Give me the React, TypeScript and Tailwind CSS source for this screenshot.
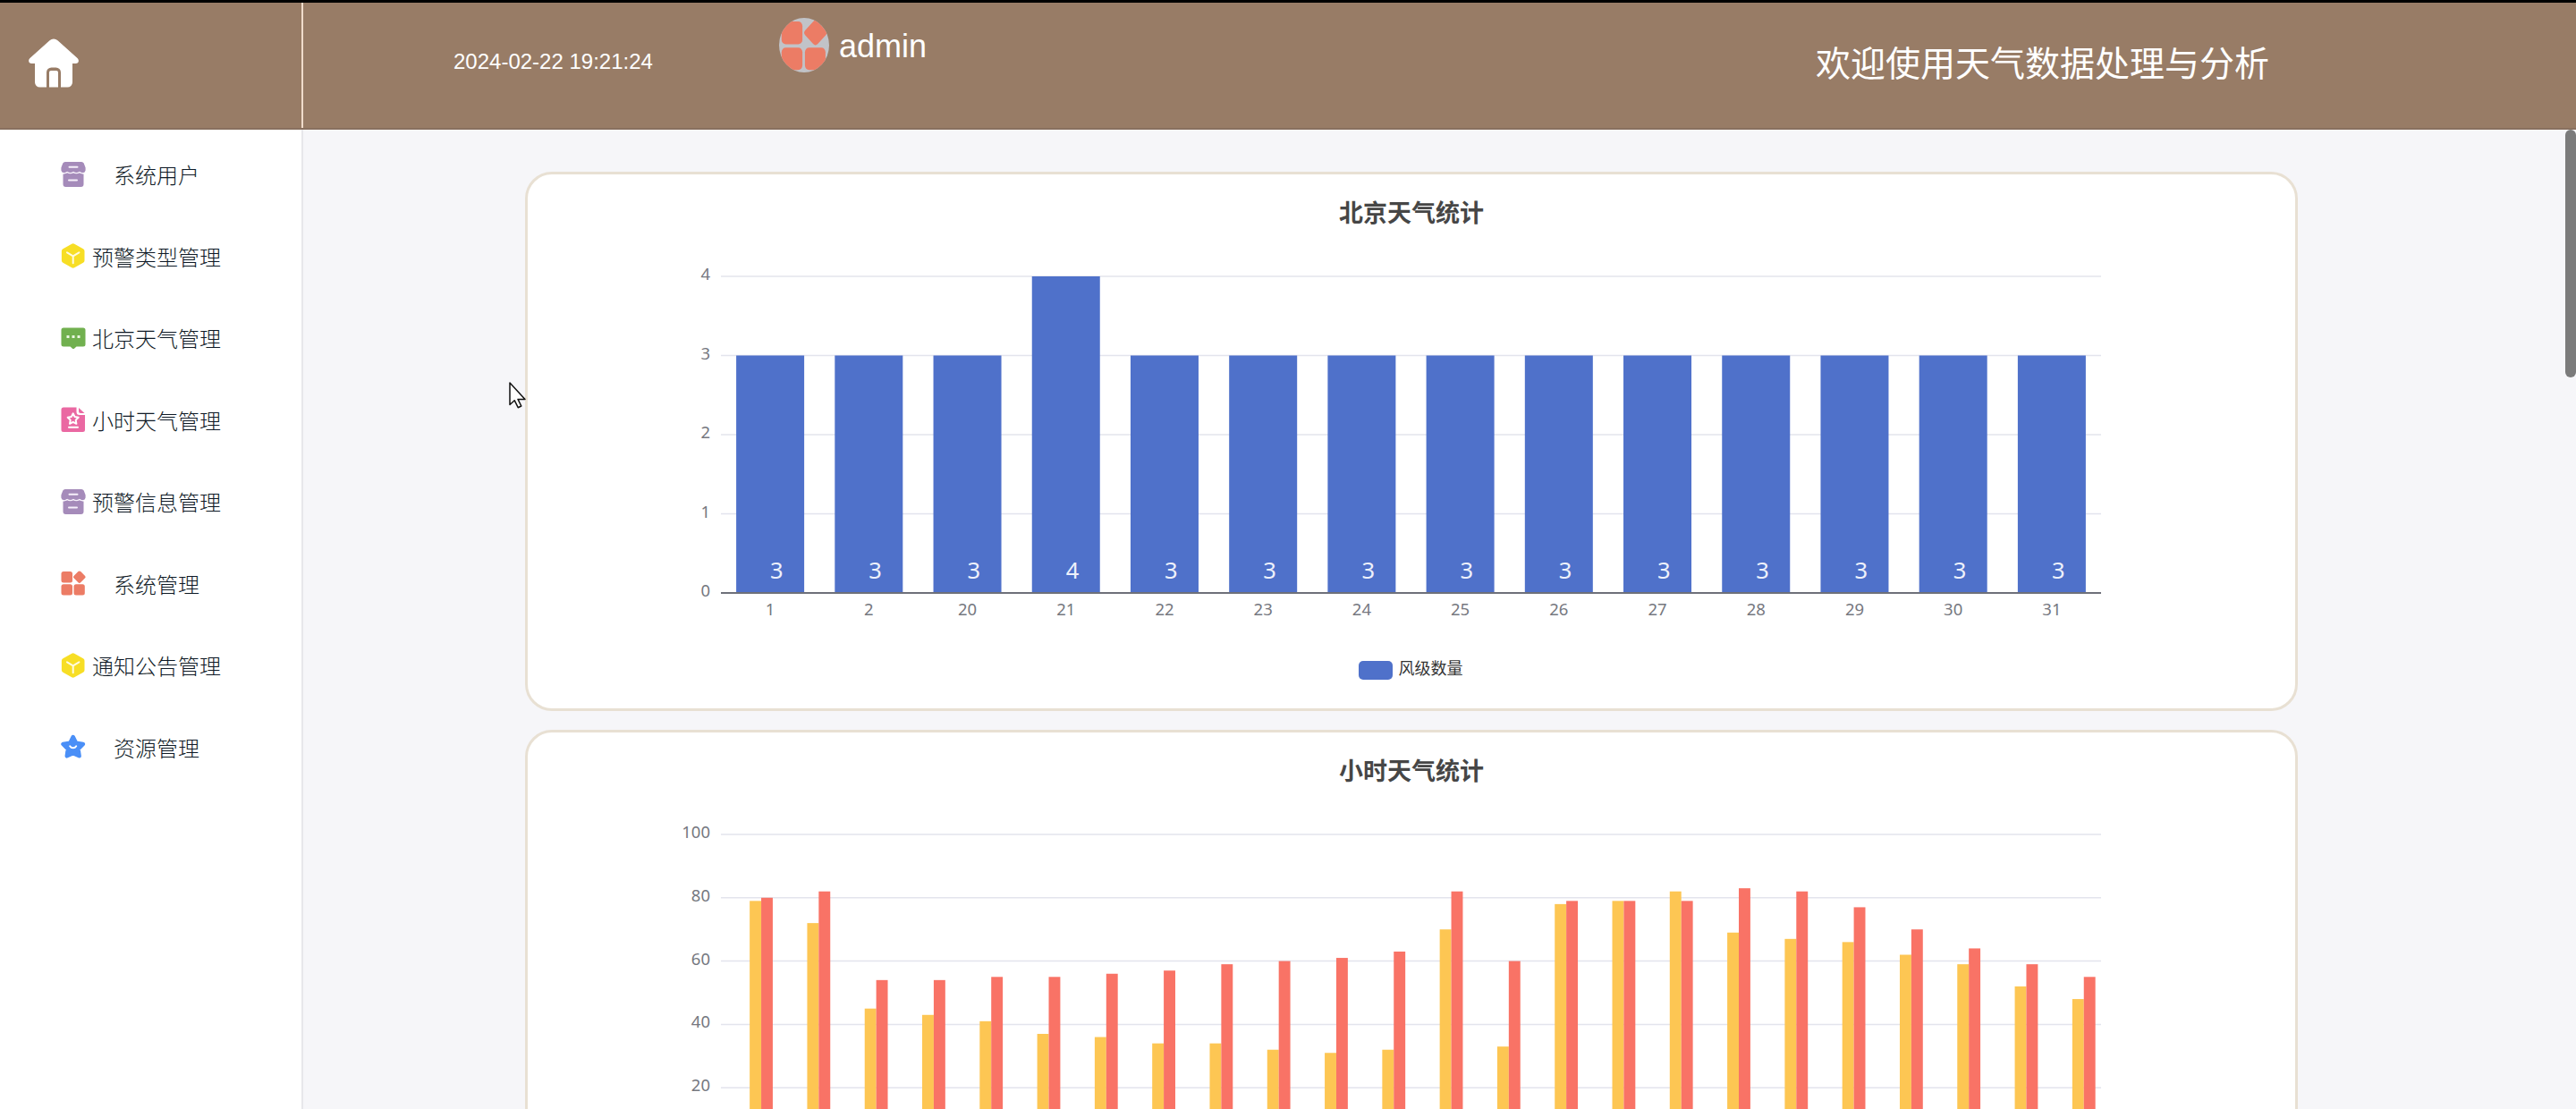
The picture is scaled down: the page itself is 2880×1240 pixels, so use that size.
import type { ReactNode } from "react";

type Series = { color: string; values: number[]; slot: number; showLabel?: boolean };

// Plot area shared by every chart, in card pixels
const PLOT = { left: 216, right: 1759, top: 114, bottom: 468 };

const StoreIcon = () => (
    <svg viewBox="0 0 28 28" className="size-7">
        <path d="M5 0h18a3 3 0 0 1 2.700 1.600L27.600 6.500v3a3.200 3.200 0 0 1-3 2.700c-1.500 0-2.500-.4-3.500-1.300-1 1-2.200 1.500-3.600 1.500s-2.600-.5-3.500-1.500c-1 1-2.200 1.500-3.600 1.500S7.900 11.900 7 10.900c-1 .9-2 1.300-3.500 1.300A3.200 3.200 0 0 1 .4 9.500v-3L2.300 1.600A3 3 0 0 1 5 0z" fill="#a58bba" />
        <path d="M2.500 13.400c2 0 3.500-.5 4.700-1.300 2 1.300 4.800 1.300 6.800 0 2 1.300 4.800 1.300 6.800 0 1.200.8 2.700 1.300 4.700 1.300V25a3 3 0 0 1-3 3h-17a3 3 0 0 1-3-3z" fill="#a58bba" />
        <path d="M2.500 12.800c2 0 3.500-.5 4.700-1.300 2 1.300 4.800 1.300 6.800 0 2 1.300 4.800 1.300 6.800 0 1.200.8 2.700 1.300 4.700 1.300" fill="none" stroke="#f6f0fa" strokeWidth="1.400" />
        <path d="M9.500 5.700h9M9 20.500h9" stroke="#f6f0fa" strokeWidth="2" strokeLinecap="round" />
    </svg>
);

const CubeIcon = () => (
    <svg viewBox="0 0 28 28" className="size-7">
        <path d="M12.200.8a3 3 0 0 1 3 0l9.800 5.400a3 3 0 0 1 1.500 2.600v10.400a3 3 0 0 1-1.500 2.600l-9.800 5.400a3 3 0 0 1-3 0l-9.800-5.400A3 3 0 0 1 .9 19.200V8.800a3 3 0 0 1 1.500-2.600z" fill="#f7de25" />
        <path d="M7 10.300l6.700 4 6.700-4M13.700 14.300v8" fill="none" stroke="#fffbe0" strokeWidth="2" strokeLinecap="round" strokeLinejoin="round" />
    </svg>
);

const ChatIcon = () => (
    <svg viewBox="0 0 28 28" className="size-7">
        <path d="M3 2.500h22a2.500 2.500 0 0 1 2.500 2.500v16a2.500 2.500 0 0 1-2.500 2.500h-7.500L15 25.700a1.500 1.500 0 0 1-2 0l-2.500-2.200H3A2.500 2.500 0 0 1 .5 21V5A2.500 2.500 0 0 1 3 2.500z" fill="#71b04f" />
        <path d="M6.500 11h3v3h-3zM12.500 11h3v3h-3zM18.500 11h3v3h-3z" fill="#eaf6e2" />
    </svg>
);

const DocIcon = () => (
    <svg viewBox="0 0 28 28" className="size-7">
        <path d="M3 .5h14.500v5a3.500 3.500 0 0 0 3.500 3.500h6v16.500a2.500 2.500 0 0 1-2.500 2.500H3A2.500 2.500 0 0 1 .5 25.500V3A2.500 2.500 0 0 1 3 .5z" fill="#ea68a2" />
        <path d="M20 1l6.500 6H22a2 2 0 0 1-2-2z" fill="#ea68a2" />
        <path d="M13.700 7.300l1.900 3.800 4.100.6-3 2.900.7 4.200-3.700-2-3.700 2 .7-4.200-3-2.900 4.100-.6z" fill="none" stroke="#fff" strokeWidth="2" strokeLinejoin="round" />
        <path d="M9 22.700h10" stroke="#fff" strokeWidth="2" strokeLinecap="round" />
    </svg>
);

const TileShapes = () => (
    <g fill="#ec7c65">
        <rect x="0.500" y="1" width="12.500" height="12.500" rx="2.500" />
        <rect x="0.500" y="15.300" width="12.500" height="12.300" rx="2.500" />
        <rect x="14.500" y="15.300" width="12.300" height="12.300" rx="2.500" />
        <rect x="15.500" y="1.900" width="10.600" height="10.600" rx="2" transform="rotate(45 20.800 7.200)" />
    </g>
);

const TilesIcon = () => (
    <svg viewBox="0 0 28 28" className="size-7">
        <TileShapes />
    </svg>
);

const StarIcon = () => (
    <svg viewBox="0 0 28 28" className="size-7">
        <path d="M13.700 3l3.300 6.800 7.900 1.200-5.400 5.500 1.100 7.800-6.900-3.200-6.900 3.200 1.100-7.800L2.500 11l7.900-1.200z" fill="#4a8ff7" stroke="#4a8ff7" strokeWidth="4.500" strokeLinejoin="round" />
        <path d="M10.200 13.300c1.600 2.700 5.400 2.700 7 0" fill="none" stroke="#fff" strokeWidth="2" strokeLinecap="round" />
    </svg>
);

const menu: { label: string; icon: ReactNode }[] = [
    { label: "系统用户", icon: <StoreIcon /> },
    { label: "预警类型管理", icon: <CubeIcon /> },
    { label: "北京天气管理", icon: <ChatIcon /> },
    { label: "小时天气管理", icon: <DocIcon /> },
    { label: "预警信息管理", icon: <StoreIcon /> },
    { label: "系统管理", icon: <TilesIcon /> },
    { label: "通知公告管理", icon: <CubeIcon /> },
    { label: "资源管理", icon: <StarIcon /> },
];

const windDays = ["1", "2", "20", "21", "22", "23", "24", "25", "26", "27", "28", "29", "30", "31"];
const windLevels = [3, 3, 3, 4, 3, 3, 3, 3, 3, 3, 3, 3, 3, 3];

const hourlyYellow = [79, 72, 45, 43, 41, 37, 36, 34, 34, 32, 31, 32, 70, 33, 78, 79, 82, 69, 67, 66, 62, 59, 52, 48];
const hourlyRed = [80, 82, 54, 54, 55, 55, 56, 57, 59, 60, 61, 63, 82, 60, 79, 79, 79, 83, 82, 77, 70, 64, 59, 55];

type BarChartProps = {
    max: number;
    ticks: number[];
    count: number;
    barWidth: number;
    slots: number;
    series: Series[];
    labels?: string[];
};

const BarChart = ({ max, ticks, count, barWidth, slots, series, labels }: BarChartProps) => {
    const step = (PLOT.right - PLOT.left) / count;
    const y = (v: number) => PLOT.bottom - (v / max) * (PLOT.bottom - PLOT.top);
    const center = (i: number) => PLOT.left + step * (i + 0.5);

    return (
        <svg viewBox="0 0 1976 597" className="block w-[1976px] h-[597px] font-['Noto_Sans','Noto_Sans_CJK_SC',sans-serif]">
            {ticks.map((t) => (
                <g key={t}>
                    <line x1={PLOT.left} x2={PLOT.right} y1={y(t)} y2={y(t)} stroke="#e3e4ed" strokeWidth="1.500" />
                    <text x="204" y={y(t) + 4} textAnchor="end" fontSize="18.500" fill="#76787f">{t}</text>
                </g>
            ))}
            {series.map((s) =>
                s.values.map((v, i) => {
                    const x = center(i) + (s.slot - slots / 2) * barWidth;
                    return (
                        <g key={`${s.slot}-${i}`}>
                            <rect x={x} y={y(v)} width={barWidth} height={PLOT.bottom - y(v)} fill={s.color} />
                            {s.showLabel && (
                                <text x={center(i) + 7.3} y="451.500" textAnchor="middle" fontSize="25.500" fill="#eef1fb">{v}</text>
                            )}
                        </g>
                    );
                })
            )}
            <line x1={PLOT.left} x2={PLOT.right} y1={PLOT.bottom} y2={PLOT.bottom} stroke="#6e7079" strokeWidth="2" />
            {labels?.map((l, i) => (
                <text key={l} x={center(i)} y="493" textAnchor="middle" fontSize="18.500" fill="#76787f">{l}</text>
            ))}
        </svg>
    );
};

const ChartCard = ({ title, legend, children }: { title: string; legend?: string; children: ReactNode }) => (
    <section className="relative w-[1982px] h-[603px] shrink-0 bg-white border-3 border-[#e8e0d3] rounded-[30px]">
        <h2 className="absolute inset-x-0 top-[25px] text-center text-[27px] leading-[38px] font-bold text-[#464646]">{title}</h2>
        {children}
        {legend && (
            <div className="absolute left-0 right-[2px] top-[540px] flex items-center justify-center gap-[7px]">
                <span className="w-[38px] h-[21px] mt-[3px] rounded-[5px] bg-[#4f71ca]" />
                <span className="text-[18px] leading-[26px] text-[#333]">{legend}</span>
            </div>
        )}
    </section>
);

const Header = () => (
    <header className="flex h-[145px] border-t-3 border-t-black border-b-2 border-b-[#89705f] bg-[#987c66] text-white shrink-0">
        <div className="w-[339px] border-r-2 border-[#f0dccb] pl-8 pt-10">
            <svg viewBox="0 0 56 56" className="size-14">
                <path d="M23.500 2.200a7 7 0 0 1 9 0L54.500 22c2.600 2.400 1.300 6-2 6H49v21a5.500 5.500 0 0 1-5.500 5.500H36V38a5.500 5.500 0 0 0-5.500-5.500h-5A5.500 5.500 0 0 0 20 38v16.500h-7.500A5.500 5.500 0 0 1 7 49V28H3.500c-3.300 0-4.600-3.600-2-6z" fill="#fff" />
                <path d="M23 54.500V38a2 2 0 0 1 2-2h6a2 2 0 0 1 2 2v16.500z" fill="#fff" />
            </svg>
        </div>
        <div className="pl-[168px] pt-12 w-[532px] text-[24px] leading-9">2024-02-22 19:21:24</div>
        <div className="flex items-start pt-[17px]">
            <div className="w-14 h-[61px] rounded-[50%] overflow-hidden bg-[#c1c3c8]">
                <svg viewBox="-1 -1 30 30" preserveAspectRatio="none" className="w-14 h-[61px]">
                    <TileShapes />
                </svg>
            </div>
            <span className="ml-[11px] mt-3 text-[36px] leading-10">admin</span>
        </div>
        <h1 className="ml-auto mr-[343px] mt-[42px] text-[39px] leading-[54px]">欢迎使用天气数据处理与分析</h1>
    </header>
);

const Sidebar = () => (
    <aside className="w-[339px] shrink-0 bg-white border-r-2 border-[#e7e7eb] pt-1.5">
        {menu.map((item) => (
            <div key={item.label} className="flex items-center h-[91.5px] pl-[68px] gap-2">
                <div className="-mt-1">{item.icon}</div>
                <span className="w-36 -ml-px mt-px text-center text-[24px] leading-9 font-light text-[#0f1a26]">{item.label}</span>
            </div>
        ))}
    </aside>
);

export default function App() {
    return (
        <div className="relative flex flex-col w-[2880px] h-[1240px] overflow-hidden bg-[#f6f6f9] font-['Liberation_Sans','Noto_Sans_CJK_SC',sans-serif]">
            <Header />
            <div className="flex flex-1 min-h-0">
                <Sidebar />
                <main className="flex flex-col gap-[21px] flex-1 pl-[248px] pt-[47px] overflow-hidden">
                    <ChartCard title="北京天气统计" legend="风级数量">
                        <BarChart
                            max={4}
                            ticks={[0, 1, 2, 3, 4]}
                            count={14}
                            barWidth={76}
                            slots={1}
                            labels={windDays}
                            series={[{ color: "#4f71ca", values: windLevels, slot: 0, showLabel: true }]}
                        />
                    </ChartCard>
                    <ChartCard title="小时天气统计">
                        <BarChart
                            max={100}
                            ticks={[20, 40, 60, 80, 100]}
                            count={24}
                            barWidth={12.9}
                            slots={4}
                            series={[
                                { color: "#fdc653", values: hourlyYellow, slot: 2 },
                                { color: "#f97366", values: hourlyRed, slot: 3 },
                            ]}
                        />
                    </ChartCard>
                </main>
            </div>

            {/* Scrollbar thumb */}
            <div className="absolute right-0 top-[145px] w-3 h-[277px] rounded-full bg-[#7b7b7b]" />

            {/* Mouse pointer */}
            <svg viewBox="0 0 20 30" className="absolute left-[569px] top-[427px] w-5 h-[30px]">
                <path d="M1 1v24.500l5.200-4.800 4 8 3.600-1.700-3.800-7.600H18z" fill="#fff" stroke="#111" strokeWidth="1.500" strokeLinejoin="round" />
            </svg>
        </div>
    );
}
